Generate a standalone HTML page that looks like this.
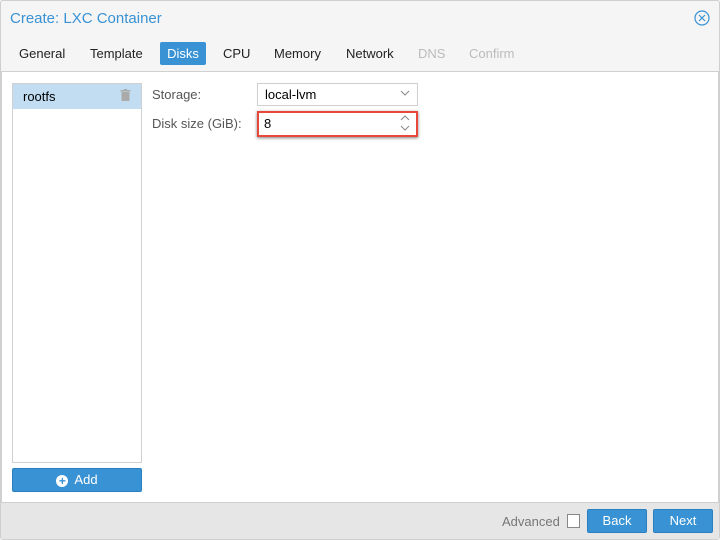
<!DOCTYPE html>
<html><head><style>
*{box-sizing:border-box;margin:0;padding:0}
body{width:720px;height:540px;background:#f5f5f5;font-family:"Liberation Sans",sans-serif;font-size:13px;color:#000;position:relative;overflow:hidden}
.a{position:absolute}
.tab{position:absolute;top:42px;height:23px;line-height:23px;font-size:13px;color:#222}
</style></head><body>
<div class="a" style="left:0;top:0;width:720px;height:540px;border:1px solid #cfcfcf;border-radius:3px"></div>
<div class="a" style="left:10px;top:10px;font-size:15px;color:#3892d4">Create: LXC Container</div>
<svg class="a" style="left:694px;top:10px" width="16" height="16" viewBox="0 0 16 16"><circle cx="8" cy="8" r="7" fill="none" stroke="#3892d4" stroke-width="1.2"/><path d="M5 5L11 11M11 5L5 11" stroke="#3892d4" stroke-width="1.2"/></svg>
<div class="tab" style="left:19px">General</div>
<div class="tab" style="left:90px">Template</div>
<div class="tab" style="left:160px;width:46px;background:#3892d4;color:#fff;text-align:center;border-radius:2px">Disks</div>
<div class="tab" style="left:223px">CPU</div>
<div class="tab" style="left:274px">Memory</div>
<div class="tab" style="left:346px">Network</div>
<div class="tab" style="left:418px;color:#bbb">DNS</div>
<div class="tab" style="left:469px;color:#bbb">Confirm</div>
<div class="a" style="left:1px;top:71px;width:718px;height:432px;background:#fff;border:1px solid #d0d0d0"></div>
<div class="a" style="left:12px;top:83px;width:130px;height:380px;border:1px solid #d0d0d0"></div>
<div class="a" style="left:13px;top:84px;width:128px;height:25px;background:#c2ddf2"></div>
<div class="a" style="left:23px;top:89px">rootfs</div>
<svg class="a" style="left:120px;top:89px" width="11" height="12" viewBox="0 0 11 12"><rect x="0.5" y="1" width="10" height="1.5" fill="#aaa"/><rect x="4" y="0" width="3" height="1.5" fill="#aaa"/><rect x="1.5" y="3" width="8" height="9" fill="#aaa"/></svg>
<div class="a" style="left:12px;top:468px;width:130px;height:24px;background:#3892d4;border:1px solid #2a7fc0;border-radius:2px;color:#fff;text-align:center;line-height:22px"><span style="display:inline-block;width:12px;height:12px;border-radius:50%;background:#fff;color:#3892d4;font-weight:bold;font-size:12px;line-height:12px;vertical-align:-1px;margin-right:6px">+</span>Add</div>
<div class="a" style="left:152px;top:87px;color:#555">Storage:</div>
<div class="a" style="left:257px;top:83px;width:161px;height:23px;border:1px solid #cfcfcf;line-height:21px;padding-left:7px">local-lvm</div>
<svg class="a" style="left:400px;top:90px" width="10" height="6"><path d="M1 1L5 5L9 1" fill="none" stroke="#888"/></svg>
<div class="a" style="left:152px;top:116px;color:#555">Disk size (GiB):</div>
<div class="a" style="left:257px;top:111px;width:161px;height:26px;border:2px solid #e8473b;box-shadow:0 1px 3px rgba(0,0,0,.5);line-height:22px;padding-left:5px;background:#fff">8</div>
<svg class="a" style="left:400px;top:115px" width="10" height="16"><path d="M1 5L5 1L9 5M1 11L5 15L9 11" fill="none" stroke="#888"/></svg>
<div class="a" style="left:1px;top:503px;width:718px;height:36px;background:#e6e6e6"></div>
<div class="a" style="left:502px;top:514px;color:#777">Advanced</div>
<div class="a" style="left:567px;top:514px;width:13px;height:14px;border:1px solid #888;background:#fff"></div>
<div class="a" style="left:587px;top:509px;width:60px;height:24px;background:#3892d4;border:1px solid #2a7fc0;border-radius:2px;color:#fff;text-align:center;line-height:22px">Back</div>
<div class="a" style="left:653px;top:509px;width:60px;height:24px;background:#3892d4;border:1px solid #2a7fc0;border-radius:2px;color:#fff;text-align:center;line-height:22px">Next</div>
</body></html>
